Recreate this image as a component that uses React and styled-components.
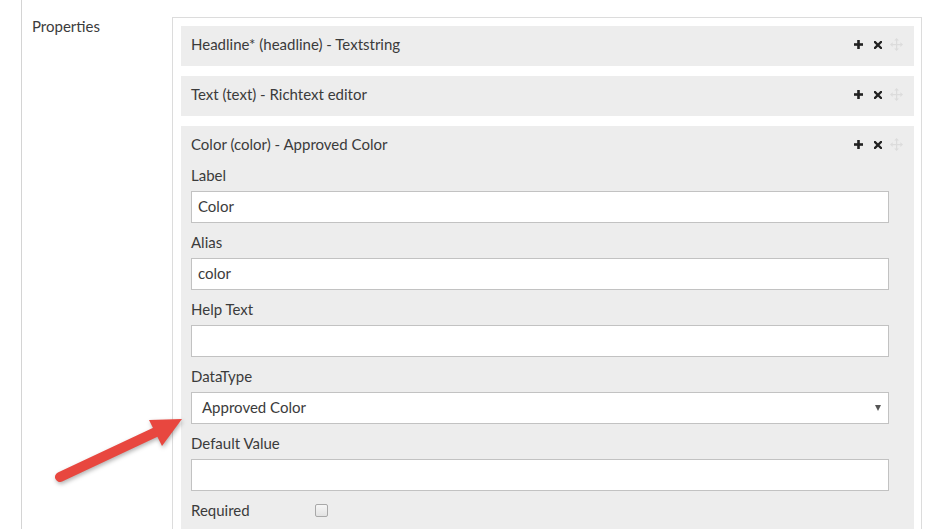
import React from "react";
import styled, { createGlobalStyle } from "styled-components";

const GlobalStyle = createGlobalStyle`
  html, body {
    margin: 0;
    padding: 0;
    background: #fff;
  }
  body {
    font-family: Lato, "Open Sans", "Liberation Sans", sans-serif;
    font-size: 15px;
    color: #3b3b3b;
  }
`;

// the three property rows
const properties = [
  { title: "Headline* (headline) - Textstring", open: false },
  { title: "Text (text) - Richtext editor", open: false },
  { title: "Color (color) - Approved Color", open: true },
];

const App = () => {
  return (
    <Page>
      <GlobalStyle />
      <Section>
        <SideLabel>Properties</SideLabel>
        <Box>
          {properties.map((p, idx) => (
            <Panel key={`prop_${idx}`}>
              <Header $open={p.open}>
                <span>{p.title}</span>
                <Tools>
                  <ToolSlot $gap={11}>
                    <PlusIcon />
                  </ToolSlot>
                  <ToolSlot $gap={8}>
                    <CloseIcon />
                  </ToolSlot>
                  <ToolSlot $gap={0}>
                    <MoveIcon />
                  </ToolSlot>
                </Tools>
              </Header>
              {p.open && (
                <Body>
                  <Field>
                    <FieldLabel>Label</FieldLabel>
                    <TextInput value="Color" readOnly />
                  </Field>
                  <Field>
                    <FieldLabel>Alias</FieldLabel>
                    <TextInput value="color" readOnly />
                  </Field>
                  <Field>
                    <FieldLabel>Help Text</FieldLabel>
                    <TextInput value="" readOnly />
                  </Field>
                  <Field>
                    <FieldLabel>DataType</FieldLabel>
                    <Select>
                      <span>Approved Color</span>
                      <Caret />
                    </Select>
                  </Field>
                  <Field>
                    <FieldLabel>Default Value</FieldLabel>
                    <TextInput value="" readOnly />
                  </Field>
                  <CheckRow>
                    <CheckLabel>Required</CheckLabel>
                    <Checkbox />
                  </CheckRow>
                </Body>
              )}
            </Panel>
          ))}
        </Box>
      </Section>
      <Arrow />
    </Page>
  );
};

const PlusIcon = () => (
  <svg width="9" height="9" viewBox="0 0 9 9">
    <rect x="3.2" y="0" width="2.6" height="9" fill="#222" />
    <rect x="0" y="3.2" width="9" height="2.6" fill="#222" />
  </svg>
);

const CloseIcon = () => (
  <svg width="8" height="8" viewBox="0 0 8 8">
    <path d="M1 1 L7 7 M7 1 L1 7" stroke="#222" strokeWidth="2.3" strokeLinecap="square" />
  </svg>
);

const MoveIcon = () => (
  <svg width="13" height="13" viewBox="0 0 13 13">
    <g fill="#dcdcdc">
      <rect x="6" y="2" width="1.2" height="9" />
      <rect x="2" y="6" width="9" height="1.2" />
      <path d="M6.6 0 L9 2.6 L4.2 2.6 Z" />
      <path d="M6.6 13 L9 10.4 L4.2 10.4 Z" />
      <path d="M0 6.6 L2.6 4.2 L2.6 9 Z" />
      <path d="M13 6.6 L10.4 4.2 L10.4 9 Z" />
    </g>
  </svg>
);

// red annotation arrow lying over the page
const Arrow = () => (
  <ArrowSvg width="929" height="529" viewBox="0 0 929 529">
    <line x1="60" y1="477" x2="158" y2="431" stroke="#e8473f" strokeWidth="10" strokeLinecap="round" />
    <path d="M182 419 L149 420 L162 446 Z" fill="#e8473f" />
  </ArrowSvg>
);

const Page = styled.div`
  position: relative;
  width: 929px;
  height: 529px;
  overflow: hidden;
  padding-left: 21px;
  box-sizing: border-box;
`;

const Section = styled.div`
  display: flex;
  height: 100%;
  border-left: 1px solid #d4d4d4;
  padding-top: 16px;
  box-sizing: border-box;
`;

const SideLabel = styled.div`
  width: 140px;
  flex: none;
  padding-left: 10px;
  line-height: 20px;
  color: #3b3b3b;
`;

const Box = styled.div`
  width: 750px;
  flex: none;
  margin-top: 1px;
  border: 1px solid #dcdcdc;
  border-bottom: none;
  padding: 8px 7px 0 8px;
  box-sizing: border-box;
  display: flex;
  flex-direction: column;
  gap: 10px;
`;

const Panel = styled.div`
  background: #ededed;
`;

const Header = styled.div`
  display: flex;
  justify-content: space-between;
  align-items: center;
  padding: 8px 11px ${(p) => (p.$open ? 11 : 12)}px 10px;
  line-height: 20px;
`;

const Tools = styled.div`
  display: flex;
  align-items: center;
  margin-top: 1px;
`;

const ToolSlot = styled.span`
  display: block;
  margin-right: ${(p) => p.$gap}px;
  svg {
    display: block;
  }
`;

const Body = styled.div`
  padding: 0 25px 0 10px;
`;

const Field = styled.div`
  margin-bottom: 9px;
`;

const FieldLabel = styled.div`
  line-height: 20px;
  margin-bottom: 6px;
`;

const TextInput = styled.input`
  display: block;
  width: 100%;
  height: 32px;
  box-sizing: border-box;
  border: 1px solid #c2c2c2;
  background: #fff;
  padding: 0 6px 2px;
  font-family: Lato, "Open Sans", "Liberation Sans", sans-serif;
  font-size: 15px;
  color: #3b3b3b;
  outline: none;
`;

const Select = styled.div`
  display: flex;
  justify-content: space-between;
  align-items: center;
  height: 32px;
  box-sizing: border-box;
  border: 1px solid #c2c2c2;
  background: #fff;
  padding: 0 7px 2px 10px;
`;

const Caret = styled.div`
  width: 0;
  height: 0;
  margin-top: 2px;
  border-left: 3px solid transparent;
  border-right: 3px solid transparent;
  border-top: 6px solid #555;
`;

const CheckRow = styled.div`
  display: flex;
  align-items: center;
  height: 20px;
  padding-bottom: 10px;
`;

const CheckLabel = styled.div`
  width: 124px;
  line-height: 20px;
`;

const Checkbox = styled.div`
  width: 11px;
  height: 11px;
  border: 1px solid #a8a8a8;
  border-radius: 2px;
  background: linear-gradient(#f6f6f6, #e2e2e2);
`;

const ArrowSvg = styled.svg`
  position: absolute;
  left: 0;
  top: 0;
  pointer-events: none;
  filter: drop-shadow(1px 2px 2px rgba(0, 0, 0, 0.3));
`;

export default App;
